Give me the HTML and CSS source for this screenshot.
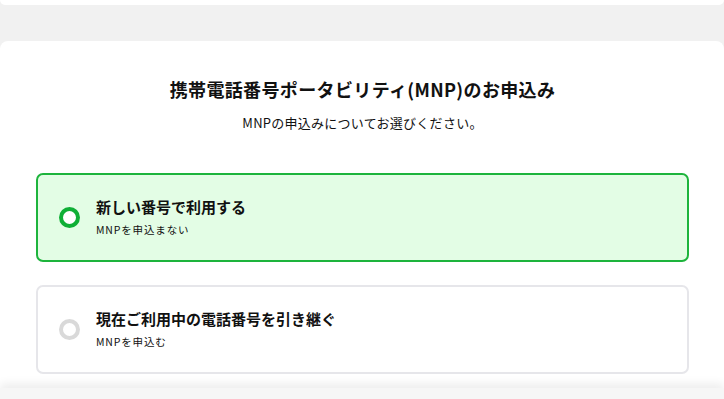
FILE: index.html
```html
<!DOCTYPE html>
<html lang="ja">
<head>
    <meta charset="utf-8">
    <title>MNPのお申込み</title>
    <link rel="stylesheet" href="styles.css">
</head>
<body>
    <div class="top-card"></div>

    <div class="main-card">
        <h1 class="title">携帯電話番号ポータビリティ(MNP)のお申込み</h1>
        <p class="lead">MNPの申込みについてお選びください。</p>

        <div class="options">
            <label class="option option-selected">
                <span class="radio"></span>
                <span class="option-body">
                    <span class="option-title">新しい番号で利用する</span>
                    <span class="option-note">MNPを申込まない</span>
                </span>
            </label>
            <label class="option">
                <span class="radio"></span>
                <span class="option-body">
                    <span class="option-title">現在ご利用中の電話番号を引き継ぐ</span>
                    <span class="option-note">MNPを申込む</span>
                </span>
            </label>
        </div>
    </div>

    <div class="footer-bar"></div>
</body>
</html>
```

FILE: styles.css
```css
body {
    margin: 0;
    background: #f1f1f1;
    font-family: "Noto Sans CJK JP", "Noto Sans", sans-serif;
    color: #111;
    height: 399px;
    overflow: hidden;
}

.top-card {
    height: 5px;
    background: #fff;
    border-radius: 0 0 7px 7px;
}

.main-card {
    margin-top: 36px;
    background: #fff;
    border-radius: 8px 8px 0 0;
    padding: 34px 35px 0 36px;
    height: 358px;
    box-sizing: border-box;
}

.title {
    margin: 0;
    text-align: center;
    font-size: 18px;
    font-weight: 700;
    line-height: 28px;
    letter-spacing: 0.02em;
}

.lead {
    margin: 10px 0 0;
    text-align: center;
    font-size: 13px;
    line-height: 20px;
    letter-spacing: 0.02em;
}

.options {
    margin-top: 40px;
    display: flex;
    flex-direction: column;
    gap: 23px;
}

.option {
    display: flex;
    align-items: center;
    height: 85px;
    padding: 0 20px;
    border: 2px solid #e6e6ea;
    border-radius: 7px;
    background: #fff;
}

.option-selected {
    border-color: #1db43c;
    background: #e3fde5;
}

.radio {
    width: 13px;
    height: 13px;
    border: 4px solid #d9d9d9;
    border-radius: 50%;
    flex-shrink: 0;
    margin-right: 16px;
    margin-left: 1px;
    background: #fff;
}

.option-selected .radio {
    border-color: #0faf36;
    background: #fff;
}

.option-body {
    display: flex;
    flex-direction: column;
    margin-top: -3px;
}

.option-title {
    font-size: 15px;
    font-weight: 700;
    line-height: 22px;
}

.option-note {
    margin-top: 5px;
    font-size: 10.5px;
    line-height: 14px;
    letter-spacing: 0.08em;
}

.footer-bar {
    position: fixed;
    left: 0;
    right: 0;
    bottom: 0;
    height: 11px;
    background: #f6f6f6;
    box-shadow: 0 -4px 10px rgba(0, 0, 0, 0.08);
}
```
